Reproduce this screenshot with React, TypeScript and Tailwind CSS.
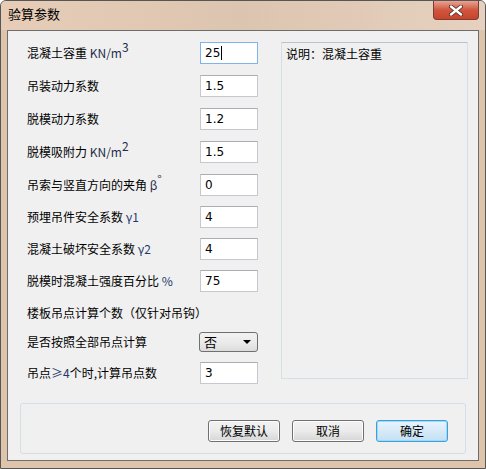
const font = { fontFamily: '"Noto Sans CJK SC", "Liberation Sans", sans-serif' };

const rows: { label: React.ReactNode; value: string; top: number }[] = [
  {
    label: (
      <>
        混凝土容重 <span className="text-[#1f2d4a]">KN/m<sup className="text-[12px] -top-[6px]">3</sup></span>
      </>
    ),
    value: '25',
    top: 11,
  },
  { label: '吊装动力系数', value: '1.5', top: 11 },
  { label: '脱模动力系数', value: '1.2', top: 11 },
  {
    label: (
      <>
        脱模吸附力 <span className="text-[#1f2d4a]">KN/m<sup className="text-[12px] -top-[6px]">2</sup></span>
      </>
    ),
    value: '1.5',
    top: 11,
  },
  {
    label: (
      <>
        吊索与竖直方向的夹角 <span className="text-[#1f2d4a]">β<sup className="text-[12px] -top-[6px]">°</sup></span>
      </>
    ),
    value: '0',
    top: 11,
  },
  { label: <>预埋吊件安全系数 <span className="text-[#1f3a6a]">γ1</span></>, value: '4', top: 10 },
  { label: <>混凝土破坏安全系数 <span className="text-[#1f3a6a]">γ2</span></>, value: '4', top: 10 },
  { label: <>脱模时混凝土强度百分比 <span className="text-[#1f3a6a]">%</span></>, value: '75', top: 10 },
];

function Field({ value, caret }: { value: string; caret?: boolean }) {
  return (
    <div
      className={`w-[58px] h-[22px] bg-white border flex items-center pl-[4px] text-[12px] text-black ${
        caret ? 'border-[#7eb4ea]' : 'border-[#c5c9cf] border-t-[#abadb3]'
      }`}
      style={{ fontFamily: '"DejaVu Sans", sans-serif' }}
    >
      {value}
      {caret && <span className="w-px h-[14px] bg-black ml-px" />}
    </div>
  );
}

function Btn({ children, primary }: { children: React.ReactNode; primary?: boolean }) {
  return (
    <button
      className={`w-[72px] h-[22px] rounded-[3px] text-[12px] text-black flex items-center justify-center border ${
        primary
          ? 'border-[#3c9fdc] bg-gradient-to-b from-[#e8f4fc] to-[#c4e0f4] shadow-[inset_0_0_0_1px_#9edaf6]'
          : 'border-[#707070] bg-gradient-to-b from-[#f2f2f2] via-[#ebebeb] to-[#d6d6d6] shadow-[inset_0_0_0_1px_#fcfcfc]'
      }`}
      style={font}
    >
      {children}
    </button>
  );
}

export default function App() {
  return (
    <div className="w-[486px] h-[469px] bg-white">
      <div className="w-[486px] h-[469px] rounded-t-[6px] border border-[#565656] bg-[#dfc4ac] flex flex-col relative overflow-hidden">
        {/* title bar */}
        <div className="h-[29px] flex items-start bg-gradient-to-r from-[#e7cdb8] via-[#dcc5b0] to-[#e6d1c0]">
          <span className="ml-[7px] mt-[6px] text-[13px] text-black leading-none" style={font}>
            验算参数
          </span>
          <div className="absolute right-[6px] top-0 w-[46px] h-[19px] rounded-b-[4px] border border-t-0 border-[#7a3e33] bg-gradient-to-b from-[#e8a293] via-[#d0553c] to-[#c7452c] flex items-center justify-center">
            <svg width="14" height="11" viewBox="0 0 14 11">
              <path d="M2 1.5 L12 9.5 M12 1.5 L2 9.5" stroke="#4a2a25" strokeWidth="4" strokeLinecap="round" />
              <path d="M2 1.5 L12 9.5 M12 1.5 L2 9.5" stroke="#ffffff" strokeWidth="2.4" strokeLinecap="round" />
            </svg>
          </div>
        </div>

        {/* client area */}
        <div className="mx-[6px] h-[431px] border border-[#6d6d6d] bg-[#f0f0f0] text-[12px] text-black" style={font}>
          <div className="flex">
            <div className="w-[250px] pl-[19px]">
              {rows.map((r, i) => (
                <div key={i} className="flex items-center justify-between h-[22px]" style={{ marginTop: r.top }}>
                  <span className="leading-none">{r.label}</span>
                  <Field value={r.value} caret={i === 0} />
                </div>
              ))}
              <div className="h-[22px] mt-[10px] flex items-center">楼板吊点计算个数（仅针对吊钩）</div>
              <div className="flex items-center justify-between h-[20px] mt-[8px]">
                <span>是否按照全部吊点计算</span>
                <div className="w-[59px] h-[20px] rounded-[3px] border border-[#707070] bg-gradient-to-b from-[#f2f2f2] via-[#ebebeb] to-[#dcdcdc] flex items-center justify-between pl-[4px] pr-[6px]">
                  <span className="text-[13px]">否</span>
                  <svg width="8" height="4" viewBox="0 0 8 4">
                    <path d="M0 0 H8 L4 4 Z" fill="#000" />
                  </svg>
                </div>
              </div>
              <div className="flex items-center justify-between h-[22px] mt-[10px]">
                <span>
                  吊点<span className="text-[#1f3a6a]">≥4</span>个时,计算吊点数
                </span>
                <Field value="3" />
              </div>
            </div>
            <div className="ml-[23px] mt-[11px] w-[187px] h-[337px] border border-[#d5dfe5] border-t-[#b8c4cc] px-[4px] pt-[5px] leading-none">
              说明：混凝土容重
            </div>
          </div>

          <div className="mx-[12px] mt-[19px] h-[51px] border border-[#d5dfe5] rounded-[3px] flex items-center justify-end gap-[12px] pr-[17px] pt-[4px]">
            <Btn>恢复默认</Btn>
            <Btn>取消</Btn>
            <Btn primary>确定</Btn>
          </div>
        </div>
      </div>
    </div>
  );
}
